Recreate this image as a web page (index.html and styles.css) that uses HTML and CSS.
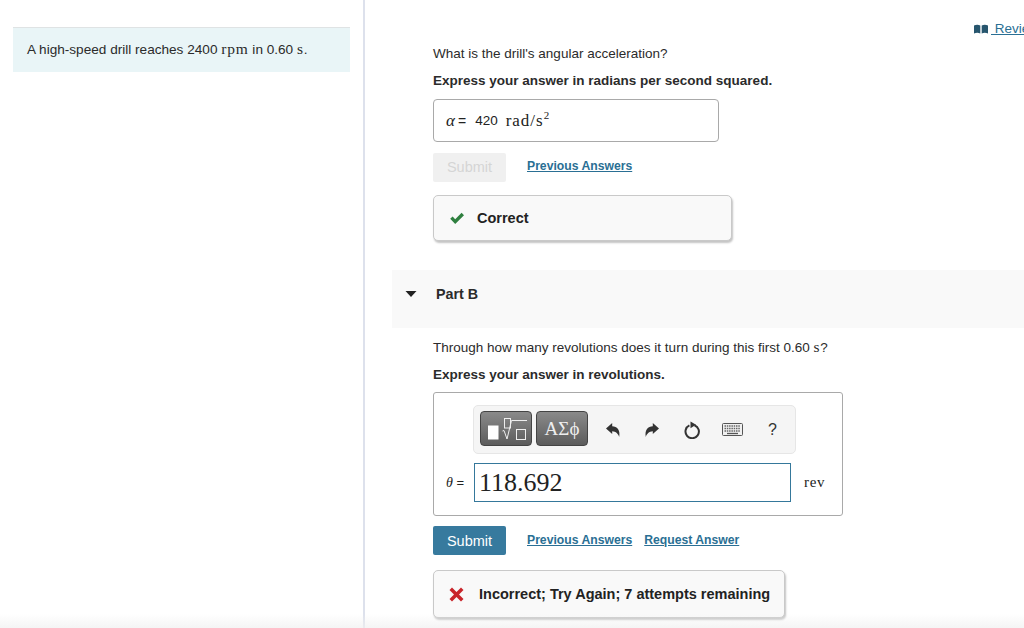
FILE: index.html
```html
<!DOCTYPE html>
<html lang="en">
<head>
<meta charset="utf-8">
<title>Part B</title>
<link rel="stylesheet" href="styles.css">
</head>
<body>
<div class="page">
  <aside class="left">
    <div class="intro">A high-speed drill reaches 2400 <span class="serif">rpm</span> in 0.60 <span class="serif">s</span>.</div>
  </aside>
  <main class="right">
    <div class="review-row">
      <a class="review" href="#"><svg class="book" width="16" height="10" viewBox="0 0 16 10"><path d="M1 1.500C3 .5 5.500 .5 7.300 1.500V9.500C5.500 8.500 3 8.500 1 9.500ZM8.700 1.500C10.500 .5 13 .5 15 1.500V9.500C13 8.500 10.500 8.500 8.700 9.500Z" fill="#27566e"/></svg><span class="review-text">&nbsp;Review</span></a>
    </div>
    <section class="part-a">
      <p class="q">What is the drill's angular acceleration?</p>
      <p class="hint">Express your answer in radians per second squared.</p>
      <div class="answer-box"><i class="serif var">α</i><span class="eq">=</span><span class="val">420</span><span class="serif unit">rad/s<sup>2</sup></span></div>
      <div class="actions">
        <button class="btn disabled">Submit</button>
        <a class="link" href="#">Previous Answers</a>
      </div>
      <div class="feedback ok">
        <svg width="16" height="13" viewBox="0 0 16 13"><path d="M1.200 6.800 L3.600 4.600 L6.200 7.200 L12.600 0.800 L15 3.200 L6.200 12 Z" fill="#2f8040"/></svg>
        <span>Correct</span>
      </div>
    </section>
    <header class="part-head">
      <svg width="12" height="6" viewBox="0 0 12 6"><path d="M0.500 0H11.500L6 6Z" fill="#222"/></svg>
      <h2>Part B</h2>
    </header>
    <section class="part-b">
      <p class="q">Through how many revolutions does it turn during this first 0.60 <span class="serif">s</span>?</p>
      <p class="hint">Express your answer in revolutions.</p>
      <div class="editor">
        <div class="toolbar">
          <div class="tool tool-math">
            <svg width="48" height="30" viewBox="0 0 48 30">
              <rect x="6" y="11.500" width="10.500" height="14" fill="#fff"/>
              <rect x="22.500" y="4.500" width="6" height="9.500" fill="none" stroke="#eee"/>
              <path d="M20.500 17l1.500-.5 3 8.500 4.500-18.500h15.500" fill="none" stroke="#eee"/>
              <rect x="34.500" y="15.500" width="9" height="10" fill="none" stroke="#eee"/>
            </svg>
          </div>
          <div class="tool tool-greek">ΑΣϕ</div>
          <div class="icons">
            <svg class="ico-undo" width="16" height="16" viewBox="0 0 16 16"><path d="M1 6.500 7.200 1V4.300C12 4.300 15.500 8 14.200 15 13.300 12 11 9.500 7.200 9.300V12Z" fill="#333"/></svg>
            <svg class="ico-redo" width="16" height="16" viewBox="0 0 16 16"><path d="M15 6.500 8.800 1V4.300C4 4.300 .5 8 1.800 15 2.700 12 5 9.500 8.800 9.300V12Z" fill="#333"/></svg>
            <svg class="ico-reset" width="18" height="18" viewBox="0 0 18 18"><path d="M6.400 4.400A6.700 6.700 0 1 0 11.500 4.200" fill="none" stroke="#333" stroke-width="2"/><path d="M7.500 0.500 13 3.800 7.500 7.200Z" fill="#333"/></svg>
            <svg class="ico-keys" width="21" height="13" viewBox="0 0 21 13"><rect x="0.500" y="0.500" width="20" height="12" rx="1" fill="#f0f0f0" stroke="#555"/><path d="M2.500 3h16M2.500 5.500h16M2.500 8h16" stroke="#666" stroke-width="1.300" stroke-dasharray="1.500 .8"/><path d="M5 10.500h11" stroke="#555" stroke-width="1.300"/></svg>
            <span class="ico-help">?</span>
          </div>
        </div>
        <div class="input-row">
          <span class="lbl"><i class="serif">θ</i> =</span>
          <div class="math-input">118.692</div>
          <span class="serif rev">rev</span>
        </div>
      </div>
      <div class="actions actions-b">
        <button class="btn primary">Submit</button>
        <a class="link" href="#">Previous Answers</a>
        <a class="link" href="#">Request Answer</a>
      </div>
      <div class="feedback bad">
        <svg width="15" height="15" viewBox="0 0 15 15"><path d="M0.500 3 3 0.500 7.500 5 12 0.500 14.500 3 10 7.500 14.500 12 12 14.500 7.500 10 3 14.500 0.500 12 5 7.500Z" fill="#c9252b"/></svg>
        <span>Incorrect; Try Again; 7 attempts remaining</span>
      </div>
    </section>
  </main>
</div>
<div class="fade"></div>
</body>
</html>
```

FILE: styles.css
```css
* { box-sizing: border-box; }
html, body { margin: 0; height: 628px; overflow: hidden; background: #fff; }
body { font-family: "Liberation Sans", Arial, sans-serif; font-size: 13.500px; color: #222; position: relative; }
.serif { font-family: "Liberation Serif", serif; }
.page { display: flex; height: 628px; }
.left { width: 363px; flex: none; padding: 27px 0 0 13px; }
.intro { width: 337px; height: 45px; background: #e9f5f7; border-top: 1px solid #dfe3e4; padding: 13px 14px 0; line-height: 17px; font-size: 13.600px; color: #2b2b2b; }
.intro .serif { font-size: 15.500px; letter-spacing: .8px; line-height: 0; }
.right { flex: 1; min-width: 0; border-left: 2px solid #dde1ec; overflow: hidden; }
.review-row { height: 37px; padding: 21px 0 0 608px; white-space: nowrap; overflow: hidden; line-height: 15px; }
.review { color: #2a6f94; font-size: 13.500px; display: inline-flex; align-items: center; }
.book { margin-right: 2px; }
.review-text { text-decoration: underline; }
.part-a, .part-b { padding-left: 68px; }
.q { margin: 0; line-height: 18px; font-size: 13.500px; padding-top: 8px; color: #2b2b2b; }
.q .serif { font-size: 15.500px; letter-spacing: .8px; line-height: 0; }
.hint { margin: 9px 0 0; line-height: 18px; font-size: 13.500px; font-weight: 700; color: #2b2b2b; }
.answer-box { width: 286px; height: 43px; margin-top: 9px; border: 1px solid #a9a9a9; border-radius: 4px; padding: 0 12px; display: flex; align-items: center; font-size: 13.500px; }
.var { font-size: 17px; }
.eq { margin-left: 3px; font-size: 14px; }
.val { margin-left: 9px; }
.unit { margin-left: 8px; font-size: 17px; letter-spacing: 1px; }
.unit sup { font-size: 11px; line-height: 0; }
.actions { display: flex; align-items: center; margin-top: 11px; height: 29px; gap: 12px; }
.btn { width: 73px; height: 29px; padding: 0; border: 0; border-radius: 2px; font: 14.500px "Liberation Sans", Arial, sans-serif; }
.btn.disabled { background: #f0f0f0; color: #d5d5d5; padding-bottom: 2px; }
.btn.primary { background: #377a9e; color: #fff; }
.link { margin-left: 9px; color: #2a6f94; font-size: 12.200px; font-weight: 700; text-decoration: underline; margin-top: -3px; }
.link + .link { margin-left: 0; }
.feedback { display: flex; align-items: center; height: 46px; margin-top: 13px; border: 1px solid #c9c9c9; border-radius: 5px; background: #f9f9f9; box-shadow: 1px 2px 2px #c4c4c4; padding-left: 15px; font-size: 14.500px; font-weight: 700; color: #222; }
.ok { width: 299px; gap: 12px; }
.bad { width: 352px; height: 48px; gap: 15px; margin-top: 15px; }
.part-head { margin: 29px 0 0 27px; height: 58px; background: #f9f9f9; padding: 0 0 10px 13px; display: flex; align-items: center; }
.part-head h2 { margin: 0 0 0 19px; font-size: 14.300px; font-weight: 700; color: #2b2b2b; }
.part-b .q { padding-top: 11px; }
.editor { width: 410px; height: 124px; margin-top: 8px; border: 1px solid #a9a9a9; border-radius: 3px; padding: 12px 0 0 12px; }
.toolbar { width: 323px; height: 49px; margin-left: 27px; background: #f5f5f5; border: 1px solid #e6e6e6; border-radius: 5px; padding: 5px 6px; display: flex; gap: 4px; }
.tool { height: 35px; border: 1px solid #444; border-radius: 4px; background: linear-gradient(#8a8a8a, #5c5c5c); color: #eee; display: flex; align-items: center; justify-content: center; }
.tool-math { width: 52px; }
.tool-greek { width: 52px; font: 19px "Liberation Serif", serif; }
.icons { display: flex; align-items: center; margin-left: 13px; }
.ico-undo { margin-right: 23px; }
.ico-redo { margin-right: 23px; }
.ico-reset { margin-right: 21px; }
.ico-keys { margin-right: 25px; }
.ico-help { font-size: 16px; color: #333; }
.input-row { display: flex; align-items: center; margin-top: 9px; }
.lbl { width: 28px; font-size: 13px; white-space: nowrap; }
.lbl .serif { font-size: 14px; }
.math-input { width: 317px; height: 39px; border: 1px solid #35789b; font: 26px/37px "Liberation Serif", serif; padding-left: 4px; color: #222; }
.rev { margin-left: 13px; font-size: 15px; letter-spacing: .7px; }
.actions-b { margin-top: 10px; }
.actions-b .link { margin-top: -1px; }
.fade { position: absolute; left: 0; right: 0; bottom: 0; height: 14px; background: linear-gradient(rgba(240,240,240,0), rgba(240,240,240,.7)); pointer-events: none; }
```
